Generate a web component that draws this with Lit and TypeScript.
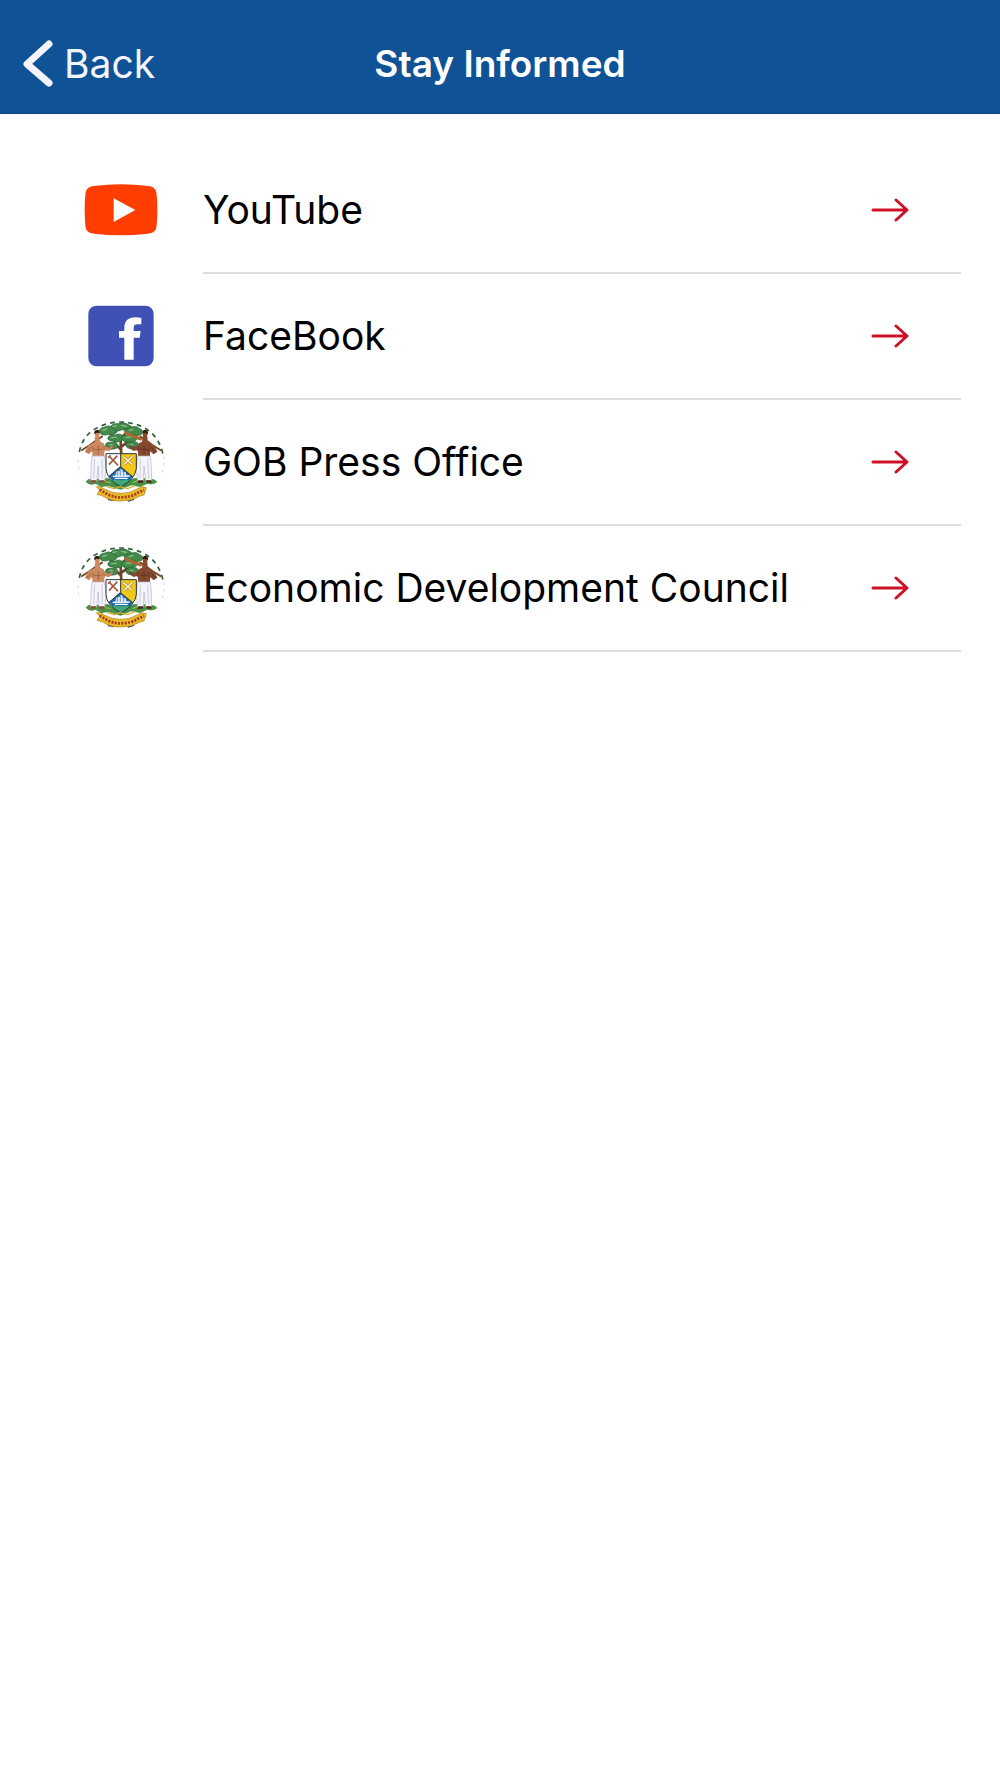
import { LitElement, html, css, svg } from "lit";
import { customElement } from "lit/decorators.js";

type IconName = "youtube" | "facebook" | "crest";

interface Channel {
  name: string;
  icon: IconName;
  href: string;
}

const channels: Channel[] = [
  { name: "YouTube", icon: "youtube", href: "#youtube" },
  { name: "FaceBook", icon: "facebook", href: "#facebook" },
  { name: "GOB Press Office", icon: "crest", href: "#press-office" },
  { name: "Economic Development Council", icon: "crest", href: "#economic-council" },
];

const youtube = html`<svg width="74" height="54" viewBox="0 0 222 162" aria-hidden="true">
  <path fill="#ff3d00" d="M30 9Q111-1 192 9C211 11 217 20 218 36Q222 81 218 126C217 142 211 150 192 152Q111 162 30 152C11 150 5 142 4 126Q0 81 4 36C5 20 11 11 30 9Z"/>
  <path fill="#fff" d="M89 46V117L154 81Z"/>
</svg>`;

const facebook = html`<svg width="66" height="62" viewBox="0 0 198 186" aria-hidden="true">
  <rect x="1" y="2" width="196" height="182" rx="25" fill="#3f51b5"/>
  <path fill="#fff" d="M109 164V98H93V78H109V69C109 47 122 37 142 37Q153 37 160 39V58H149C140 58 137 61 137 69V78H158L155 98H137V164Z"/>
</svg>`;

// One bearer: torso, arm, trousers. The right one is the mirrored left one.
const bearer = (skin: string, shade: string) => svg`
  <path d="M66 152L90 137L110 122L126 112" fill="none" stroke="#7a4523" stroke-width="6" stroke-linecap="round"/>
  <path fill="${skin}" d="M104 114L118 112L121 127L131 132L136 151L133 158L133 173H97L97 156L86 165L75 157L84 139L98 131L105 127Z"/>
  <path fill="none" stroke="${shade}" stroke-width="2" d="M99 142L100 156M115 138L115 165M103 149Q109 154 114 149Q121 154 128 148M77 157L87 153L92 144"/>
  <path fill="${skin}" d="M104 101Q105 94 112 94Q119 95 119 105L117 117Q110 121 106 114Z"/>
  <path fill="#30180c" d="M103 105Q101 92 112 91Q121 93 119 101L109 100Z"/>
  <path fill="${skin}" stroke="${shade}" stroke-width="1" d="M132 139L146 145L157 138L160 143L147 154L132 151Z"/>
  <path fill="#f4f4fb" stroke="#b4b3c6" stroke-width="2" d="M96 170H134L138 205L134 245H117L115 200L110 244H92L93 204Z"/>
  <path fill="none" stroke="#cccbdc" stroke-width="3" d="M104 178L101 237M126 178L127 238"/>
  <path fill="${shade}" d="M93 243H109L107 250H91ZM117 243H132L135 250H118Z"/>
`;

const crest = html`<svg width="90" height="84" viewBox="48 62 270 252" aria-hidden="true">
  <path fill="none" stroke="#2f5f38" stroke-width="5" stroke-dasharray="14 13" d="M58 158Q66 119 93 97Q130 69 181 68Q236 69 273 99Q300 124 309 165"/>
  <path fill="none" stroke="#cfd6dd" stroke-width="3" stroke-dasharray="8 12" d="M55 181Q53 200 59 220M312 171Q314 196 307 219"/>
  <path fill="none" stroke="#6b4429" stroke-width="8" d="M184 167L181 108M184 151L164 133M183 143L205 126M182 123L164 110M182 117L199 101"/>
  <g fill="#438a4b" stroke="#22602f" stroke-width="2">
    <path d="M151 83Q158 71 175 73Q194 66 207 77Q219 81 212 90Q199 96 186 91Q168 101 154 93Q147 90 151 83Z"/>
    <path d="M118 98Q117 85 135 83Q149 75 160 87Q172 91 169 101Q157 110 146 105Q126 112 118 98Z"/>
    <path d="M194 99Q191 89 207 86Q226 76 240 88Q253 94 245 105Q232 113 220 106Q202 111 194 99Z"/>
    <path d="M143 117Q146 104 166 107Q181 99 190 112Q193 122 180 126Q167 132 158 125Q146 126 143 117Z"/>
    <path d="M184 116Q190 103 207 105Q227 101 232 114Q231 126 216 127Q200 132 190 125Z"/>
    <path d="M136 139Q136 129 150 129Q168 125 173 136Q176 148 160 149Q142 152 136 139Z"/>
    <path d="M197 138Q200 126 217 127Q234 125 236 138Q231 151 214 149Q200 148 197 138Z"/>
  </g>
  <path fill="none" stroke="#86bf7b" stroke-width="4" d="M157 82L170 79M183 78L201 81M127 93L141 89M206 94L220 90M153 115L171 114M197 114L216 113M148 137L158 135M209 137L220 135"/>
  <path fill="#4a9146" d="M77 247Q88 233 98 242Q118 235 127 241Q145 229 155 244L182 253L213 240Q230 231 240 241Q256 232 266 242Q281 234 292 248Q279 259 262 253L240 263L214 258L182 271L145 260L124 263L106 253Q89 261 77 247Z"/>
  <path fill="none" stroke="#82b956" stroke-width="4" d="M92 248L110 247M134 247L153 250M218 250L233 244M257 247L276 248"/>
  ${bearer("#cb8a60", "#8a4d32")}
  <g transform="translate(367 0) scale(-1 1)">${bearer("#87492e", "#4d281b")}</g>
  <path d="M197 101L242 119" stroke="#a86a35" stroke-width="9" stroke-linecap="round"/>
  <path fill="#fff" d="M138 163H182V203L147 231Q138 220 138 208Z"/>
  <path fill="#f2c715" d="M182 163H229V208Q227 222 218 232L182 203Z"/>
  <path fill="#1d68ad" d="M181 201L218 232Q206 249 183 262Q159 250 147 231Z"/>
  <path fill="#3fa779" d="M155 242Q168 238 183 243Q199 238 210 242Q200 252 183 262Q165 253 155 242Z"/>
  <path fill="#d5e6f2" d="M166 230L168 217L179 214L181 208L188 211V217L197 218L200 230Z"/>
  <path fill="none" stroke="#fff" stroke-width="4" d="M158 231L209 230M164 237H203"/>
  <path fill="none" stroke="#3c6f9d" stroke-width="2" d="M181 210V230M191 216V230M172 218V230"/>
  <path fill="none" stroke="#a5583d" stroke-width="5" d="M147 170L174 198M172 169L147 196M144 175L152 168"/>
  <path fill="none" stroke="#ac8044" stroke-width="9" d="M190 172L216 195M217 171L192 195"/>
  <path fill="none" stroke="#fff2bd" stroke-width="5" d="M190 172L216 195M217 171L192 195"/>
  <path fill="none" stroke="#24383b" stroke-width="3" d="M138 163H229V208Q225 240 183 263Q140 241 138 208ZM182 163V202M147 231L181 202L218 232"/>
  <path fill="#235174" d="M141 278L157 283L163 306L144 303ZM208 284L225 279L222 302L203 308Z"/>
  <path fill="#e8b927" stroke="#b67c1b" stroke-width="2" d="M109 262Q121 259 133 269Q158 283 183 282Q211 282 233 268Q247 259 259 265L252 287L240 290Q214 306 183 305Q151 306 128 290L111 285L119 273Z"/>
  <path fill="none" stroke="#a83a22" stroke-width="8" stroke-dasharray="6 4" d="M119 271L143 285Q165 295 183 294Q213 294 232 281L252 272"/>
  <path fill="none" stroke="#d9ad35" stroke-width="4" d="M140 262L163 268L180 262L203 268L226 258"/>
</svg>`;

const icons = { youtube, facebook, crest };

@customElement("app-root")
export class AppRoot extends LitElement {
  static styles = css`
    :host {
      display: block;
      min-height: 100vh;
      background: #fff;
      color: #000;
      font-family: Inter, "Liberation Sans", sans-serif;
      font-size: 39px;
      line-height: 48px;
    }
    .bar {
      box-sizing: border-box;
      display: grid;
      grid-template-columns: 1fr auto 1fr;
      align-items: center;
      min-height: 114px;
      padding: 14px 23px 0;
      background: #0f5296;
      border-bottom: 1px solid #0c437f;
      color: #fff;
    }
    .back {
      display: flex;
      align-items: center;
      justify-self: start;
      gap: 10px;
      padding: 0;
      border: 0;
      background: none;
      color: #f4f5fc;
      font: inherit;
      cursor: pointer;
    }
    .title {
      margin: 0;
      font-size: 37px;
      font-weight: 600;
    }
    .list {
      margin: 0;
      padding: 34px 39px 0 61px;
      list-style: none;
    }
    .row {
      display: flex;
      gap: 22px;
      color: inherit;
      text-decoration: none;
    }
    .icon {
      box-sizing: border-box;
      display: flex;
      flex: none;
      align-items: center;
      justify-content: center;
      width: 120px;
      padding-bottom: 2px;
    }
    .body {
      box-sizing: border-box;
      display: flex;
      flex: 1;
      align-items: center;
      justify-content: space-between;
      min-height: 126px;
      padding-right: 52px;
      border-bottom: 2px solid #dedede;
    }
    svg {
      display: block;
      flex: none;
    }
  `;

  render() {
    return html`
      <header class="bar">
        <button class="back" type="button">
          <svg width="31" height="48" viewBox="0 0 31 48" aria-hidden="true">
            <path d="M26 4L4 24L26 43" fill="none" stroke="currentColor" stroke-width="7" stroke-linecap="round" stroke-linejoin="round"/>
          </svg>
          <span>Back</span>
        </button>
        <h1 class="title">Stay Informed</h1>
      </header>
      <main>
        <ul class="list">
          ${channels.map(
            (c) => html`<li>
              <a class="row" href=${c.href}>
                <span class="icon">${icons[c.icon]}</span>
                <span class="body">
                  <span>${c.name}</span>
                  <svg width="38" height="26" viewBox="0 0 38 26" aria-hidden="true">
                    <path d="M2 13H35M25 3L36 13L25 23" fill="none" stroke="#ce1126" stroke-width="3" stroke-linecap="round" stroke-linejoin="round"/>
                  </svg>
                </span>
              </a>
            </li>`,
          )}
        </ul>
      </main>
    `;
  }
}
